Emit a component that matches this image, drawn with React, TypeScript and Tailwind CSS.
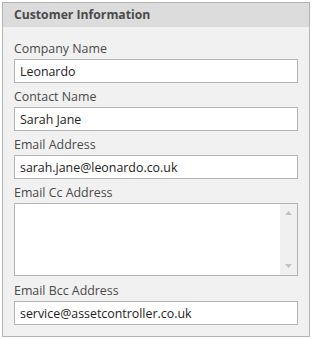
const fields = [
  { label: "Company Name", value: "Leonardo" },
  { label: "Contact Name", value: "Sarah Jane" },
  { label: "Email Address", value: "sarah.jane@leonardo.co.uk" },
];

function Label({ children }: { children: React.ReactNode }) {
  return <div className="h-[24px] pt-[6px] text-[12.4px] leading-[16px] text-[#4a4a4a]">{children}</div>;
}

function Input({ value }: { value: string }) {
  return (
    <div className="h-[24px] border border-[#b4b4b4] bg-white px-[5px] text-[12.4px] leading-[23px] text-[#222]">
      {value}
    </div>
  );
}

export default function App() {
  return (
    <div className="h-[339px] w-[312px] bg-white p-[2px]" style={{ fontFamily: '"Open Sans", "Noto Sans", sans-serif' }}>
      <div className="h-[335px] w-[308px] border border-[#b4b4b4] bg-[#f1f1f1]">
        <div className="h-[24px] bg-[#dcdcdc] px-[11px] text-[12.2px] font-bold leading-[24px] text-[#4a4a4a]">
          Customer Information
        </div>
        <div className="px-[11px] pt-[8px]">
          {fields.map((f) => (
            <div key={f.label}>
              <Label>{f.label}</Label>
              <Input value={f.value} />
            </div>
          ))}
          <Label>Email Cc Address</Label>
          <div className="flex h-[73px] border border-[#b4b4b4] bg-white">
            <div className="flex-1" />
            <div className="flex w-[17px] flex-col items-center justify-between bg-[#f0f0f0] py-[7px]">
              <svg width="7" height="4" viewBox="0 0 7 4">
                <path d="M3.5 0 L7 4 L0 4 Z" fill="#c2c2c2" />
              </svg>
              <svg width="7" height="4" viewBox="0 0 7 4">
                <path d="M0 0 L7 0 L3.5 4 Z" fill="#c2c2c2" />
              </svg>
            </div>
          </div>
          <div className="h-[1px]" />
          <Label>Email Bcc Address</Label>
          <Input value="service@assetcontroller.co.uk" />
        </div>
      </div>
    </div>
  );
}
